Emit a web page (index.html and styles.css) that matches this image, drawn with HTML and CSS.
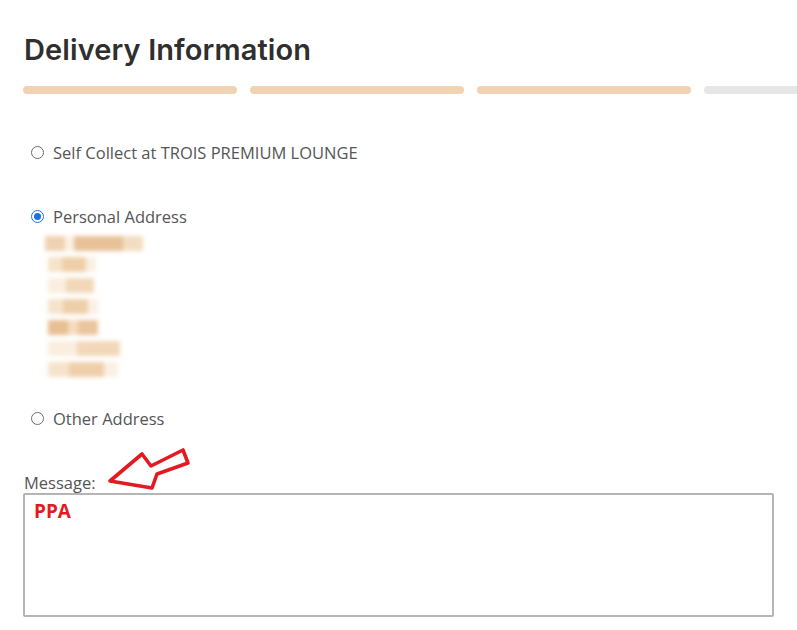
FILE: index.html
```html
<!DOCTYPE html>
<html lang="en">
<head>
<meta charset="utf-8">
<title>Delivery Information</title>
<link rel="stylesheet" href="styles.css">
</head>
<body>
<div class="page">
  <h1 class="title">Delivery Information</h1>
  <div class="steps">
    <span class="step done"></span>
    <span class="step done"></span>
    <span class="step done"></span>
    <span class="step"></span>
  </div>

  <div class="options">
    <label class="opt opt-first"><span class="radio"></span><span class="opt-text">Self Collect at TROIS PREMIUM LOUNGE</span></label>
    <label class="opt opt-second"><span class="radio checked"></span><span class="opt-text">Personal Address</span></label>
    <div class="address">
      <div class="blur">
        <span class="bl r1" style="width:98px"></span>
        <span class="bl r2" style="width:48px"></span>
        <span class="bl r3" style="width:46px"></span>
        <span class="bl r2" style="width:50px"></span>
        <span class="bl r4" style="width:50px"></span>
        <span class="bl r3" style="width:72px"></span>
        <span class="bl r2" style="width:70px"></span>
      </div>
    </div>
    <label class="opt opt-third"><span class="radio"></span><span class="opt-text">Other Address</span></label>
  </div>

  <div class="msg">
    <div class="msg-label">Message:</div>
    <div class="msg-box"><span class="ppa">PPA</span></div>
    <svg class="arrow" width="90" height="48" viewBox="0 0 90 48">
      <polygon points="4,35 36,8 45,20 77,4 82,17 51,28 46,42" fill="none" stroke="#e21b23" stroke-width="3.6" stroke-linejoin="round"/>
    </svg>
  </div>
</div>
</body>
</html>
```
FILE: styles.css
```css
* { box-sizing: border-box; }
html, body { margin: 0; padding: 0; background: #fff; }
.page {
  position: relative;
  padding: 30px 0 0 23px;
  width: 797px;
  overflow: hidden;
  height: 630px;
}
.title {
  margin: 0;
  font-family: "Inter", "DejaVu Sans", sans-serif;
  font-weight: 600;
  font-size: 29px;
  line-height: 40px;
  color: #2f2f2f;
  letter-spacing: 0.1px;
  padding-left: 1px;
}
.steps {
  display: flex;
  gap: 13px;
  margin-top: 16px;
  width: 920px;
}
.step {
  flex: 0 0 214px;
  height: 8px;
  border-radius: 4px;
  background: #e6e6e6;
}
.step.done { background: #f0d3b3; }

.options {
  font-family: "Open Sans", "Liberation Sans", sans-serif;
  color: #555;
  font-size: 16.5px;
}
.opt {
  display: flex;
  align-items: center;
  gap: 9px;
  padding-left: 8px;
  height: 22px;
}
.opt-first { margin-top: 47px; }
.opt-second { margin-top: 42px; }
.opt-third { margin-top: 30px; }
.radio {
  width: 13px;
  height: 13px;
  border-radius: 50%;
  border: 1px solid #6c6c6c;
  background: #fff;
  flex: 0 0 13px;
  position: relative;
}
.radio.checked { border-color: #1a73d9; }
.radio.checked::after {
  content: "";
  position: absolute;
  left: 2px; top: 2px;
  width: 7px; height: 7px;
  border-radius: 50%;
  background: #1a73d9;
}
.address { padding: 9px 0 0 22px; }
.blur {
  display: flex;
  flex-direction: column;
  gap: 6px;
  filter: blur(2px);
}
.bl { display: block; height: 15px; }
.r1 { background: linear-gradient(90deg, #efd2b0 0 20%, #fbf1e4 20% 30%, #e8c197 30% 80%, #f3ddc2 80%); }
.r2 { background: linear-gradient(90deg, #f6e3cc 0 30%, #efcfa9 30% 80%, #faf0e4 80%); margin-left: 3px; }
.r3 { background: linear-gradient(90deg, #faeedf 0 40%, #f2d8b9 40%); margin-left: 3px; }
.r4 { background: linear-gradient(90deg, #e8bf92 0 40%, #f4dcc0 40% 60%, #eac59d 60%); margin-left: 3px; }

.msg {
  position: relative;
  margin-top: 45px;
  width: 751px;
}
.msg-label {
  font-family: "Open Sans", "Liberation Sans", sans-serif;
  font-size: 16.5px;
  color: #555;
  line-height: 18px;
  padding-left: 1px;
}
.msg-box {
  margin-top: 1px;
  height: 124px;
  border: 2px solid #b5b5b5;
  border-radius: 2px;
  padding: 3px 0 0 9px;
}
.ppa {
  font-family: "Open Sans", "Liberation Sans", sans-serif;
  font-weight: 700;
  font-size: 19px;
  color: #e21b23;
}
.arrow {
  position: absolute;
  left: 83px;
  top: -28px;
}
```
